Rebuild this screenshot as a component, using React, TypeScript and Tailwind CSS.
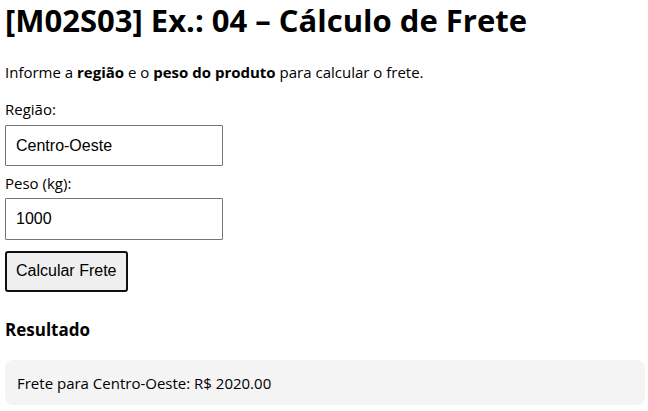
import { useState, type FormEvent } from "react";

const fieldClass =
  "block w-[218px] rounded-[1px] border border-[#767676] bg-white px-2.5 font-['Liberation_Sans',Arial,sans-serif] text-base text-black";

export default function App() {
  const [region, setRegion] = useState("Centro-Oeste");
  const [weight, setWeight] = useState("1000");
  const [result, setResult] = useState("Frete para Centro-Oeste: R$ 2020.00");

  function calculate(event: FormEvent) {
    event.preventDefault();
    setResult(`Frete para ${region}: R$ ${(Number(weight) * 2 + 20).toFixed(2)}`);
  }

  return (
    <main className="bg-white pr-[3px] pl-[5px] font-['Open_Sans','Noto_Sans',sans-serif] text-[15px] leading-6 text-black">
      <h1 className="text-[31px] leading-10 font-bold">[M02S03] Ex.: 04 – Cálculo de Frete</h1>
      <p className="mt-5">
        Informe a <strong>região</strong> e o <strong>peso do produto</strong> para calcular o frete.
      </p>
      <form onSubmit={calculate} className="mt-[13px]">
        <label htmlFor="region" className="block">Região:</label>
        <input id="region" type="text" value={region} onChange={(e) => setRegion(e.target.value)} className={`mt-1 h-[41px] ${fieldClass}`} />
        <label htmlFor="weight" className="mt-[5px] block">Peso (kg):</label>
        <input id="weight" type="text" inputMode="numeric" value={weight} onChange={(e) => setWeight(e.target.value)} className={`mt-[3px] h-[42px] ${fieldClass}`} />
        <button type="submit" className="mt-[11px] block h-[41px] rounded-[3px] border-2 border-[#101010] bg-[#efefef] pr-2.5 pb-0.5 pl-[9px] font-['Liberation_Sans',Arial,sans-serif] text-base">
          Calcular Frete
        </button>
      </form>
      <section>
        <h2 className="mt-[26px] text-[17px] leading-6 font-bold">Resultado</h2>
        <output className="mt-[18px] block rounded-lg bg-[#f4f4f4] px-3 pt-[11px] pb-2.5">{result}</output>
      </section>
    </main>
  );
}
